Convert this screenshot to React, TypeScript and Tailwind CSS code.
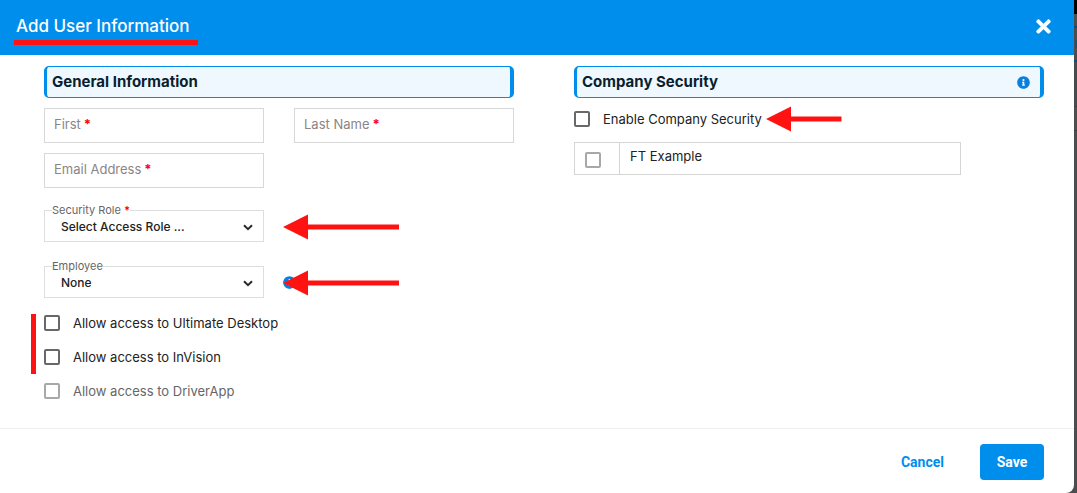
import type { ReactNode } from "react";
import { FaInfoCircle, FaTimes } from "react-icons/fa";

function Required() {
  return <span className="ml-[3px] font-bold text-[#ff0012]">*</span>;
}

function SectionTitle({ children, info }: { children: ReactNode; info?: boolean }) {
  return (
    <div className="flex h-8 items-center justify-between rounded-[5px] border-y border-r-4 border-l-3 border-[#008eed] bg-[#eff8ff] pr-2.5 pl-[5px]">
      <h2 className="text-[15px] font-bold text-[#0a1f2e]">{children}</h2>
      {info && (
        <button type="button" aria-label="Company security help" className="text-[#0780df]">
          <FaInfoCircle size={13} />
        </button>
      )}
    </div>
  );
}

function TextField({ id, label, type = "text" }: { id: string; label: string; type?: string }) {
  return (
    <div className="relative">
      <input id={id} type={type} required className="block h-[35px] w-full border border-[#d8d8d8] px-2.5 text-[13px] outline-none" />
      <label htmlFor={id} className="pointer-events-none absolute inset-y-0 left-2.5 flex items-center pb-px text-[13px] text-[#8b8585]">
        {label}
        <Required />
      </label>
    </div>
  );
}

function SelectField({ id, label, value, required }: { id: string; label: string; value: string; required?: boolean }) {
  return (
    <div className="relative">
      <select id={id} className="block h-8 w-full appearance-none border border-[#dedede] bg-white pt-0.5 pr-8 pl-4 text-xs font-medium text-[#222] outline-none">
        <option>{value}</option>
      </select>
      <label htmlFor={id} className="absolute -top-2 left-2 bg-white text-[11px] leading-4 text-[#666]">
        {label}
        {required && <Required />}
      </label>
      <svg viewBox="0 0 10 7" className="pointer-events-none absolute top-3.5 right-[11px] h-[7px] w-2.5" fill="none" stroke="#2b2b2b" strokeWidth="2">
        <path d="M1 1.2 5 5.2 9 1.2" />
      </svg>
    </div>
  );
}

function CheckRow({ id, label, disabled }: { id: string; label: string; disabled?: boolean }) {
  return (
    <div className="flex h-4 items-center gap-[13px]">
      <input
        id={id}
        type="checkbox"
        disabled={disabled}
        className="size-4 shrink-0 appearance-none rounded-[2px] border-2 border-[#686868] checked:bg-[#008eed] disabled:border-[#a8a8a8]"
      />
      <label htmlFor={id} className={disabled ? "text-[13px] leading-4 text-[#666]" : "text-[13px] leading-4 text-[#222]"}>
        {label}
      </label>
    </div>
  );
}

function LongArrow() {
  return (
    <svg viewBox="0 0 118 26" className="pointer-events-none relative h-[26px] w-[118px]" fill="#ff1212">
      <path d="M0 13 25 .5V10.500h91v5H25V25.500Z" />
    </svg>
  );
}

function ShortArrow() {
  return (
    <svg viewBox="0 0 76 26" className="pointer-events-none h-[26px] w-[76px] shrink-0" fill="#ff1212">
      <path d="M0 13 25 .5V10.500h50.500v5H25V25.500Z" />
    </svg>
  );
}

export default function App() {
  return (
    <div className="flex min-h-screen bg-[#4b4c4e] font-['Inter',sans-serif]">
      <main className="flex grow flex-col rounded-br-lg bg-white">
        <header className="flex h-[55px] items-center justify-between bg-[#008eed] pr-5 pl-4 text-white">
          <h1 className="relative pb-0.5 text-[17px] font-medium">
            Add User Information
            <span className="absolute -right-2 -bottom-1 -left-0.5 h-[5px] bg-[#ff1212]" />
          </h1>
          <button type="button" aria-label="Close" className="pb-0.5">
            <FaTimes size={21} />
          </button>
        </header>

        <form className="grid grow grid-cols-2 items-start gap-[60px] pt-[11px] pr-[30px] pb-[29px] pl-11">
          <section>
            <SectionTitle>General Information</SectionTitle>
            <div className="mt-2.5 grid grid-cols-2 gap-x-[30px] gap-y-2.5">
              <TextField id="first" label="First" />
              <TextField id="last" label="Last Name" />
              <TextField id="email" label="Email Address" type="email" />
            </div>
            <div className="mt-[22px] grid grid-cols-2 items-center gap-x-2 gap-y-6">
              <div className="pr-[11px]">
                <SelectField id="role" label="Security Role" value="Select Access Role ..." required />
              </div>
              <div className="pt-0.5">
                <LongArrow />
              </div>
              <div className="pr-[11px]">
                <SelectField id="employee" label="Employee" value="None" />
              </div>
              <div className="relative pt-0.5">
                <button type="button" aria-label="Employee help" className="absolute inset-y-0 left-0 text-[#0780df]">
                  <FaInfoCircle size={13} />
                </button>
                <LongArrow />
              </div>
            </div>
            <div className="relative mt-[17px] flex flex-col gap-[18px]">
              <span className="absolute -top-px -left-[13px] h-[60px] w-[5px] bg-[#ff1212]" />
              <CheckRow id="desktop" label="Allow access to Ultimate Desktop" />
              <CheckRow id="invision" label="Allow access to InVision" />
              <CheckRow id="driver" label="Allow access to DriverApp" disabled />
            </div>
          </section>

          <section>
            <SectionTitle info>Company Security</SectionTitle>
            <div className="mt-2 flex h-[26px] items-center gap-1">
              <CheckRow id="company" label="Enable Company Security" />
              <ShortArrow />
            </div>
            <table className="mt-2.5 h-[33px] w-[82.4%] border-collapse text-[13px] text-[#222]">
              <tbody>
                <tr>
                  <td className="w-[45px] border border-[#d5d5d5] pt-0.5 pr-0 pb-0 pl-2.5">
                    <input
                      type="checkbox"
                      aria-label="FT Example"
                      disabled
                      className="block size-4 appearance-none rounded-[2px] border-2 border-[#a8a8a8]"
                    />
                  </td>
                  <td className="border border-[#d5d5d5] px-2.5 pt-0 pb-1">FT Example</td>
                </tr>
              </tbody>
            </table>
          </section>
        </form>

        <footer className="flex h-[65px] items-center justify-end gap-5 border-t border-[#f0f0f0] pt-0.5 pr-[30px] font-['Roboto',sans-serif] text-sm font-bold">
          <button type="button" className="h-9 rounded px-4 text-[#008eed]">
            Cancel
          </button>
          <button type="submit" className="h-9 w-16 rounded bg-[#008eed] text-white">
            Save
          </button>
        </footer>
      </main>
      <aside className="flex w-[3px] shrink-0 flex-col">
        <div className="h-3.5 bg-black" />
        <div className="h-3 bg-[#4d4d4d]" />
        <div className="flex h-9 flex-col items-end justify-center border-y-2 border-[#005087] bg-[#4d4d4d]">
          <span className="h-2 w-0.5 bg-[#25506c]" />
        </div>
        <div className="h-11 bg-[#474b4f]" />
        <div className="h-[25px] border-y border-[#3f3f3f] bg-[#4d4d4d]" />
      </aside>
    </div>
  );
}
